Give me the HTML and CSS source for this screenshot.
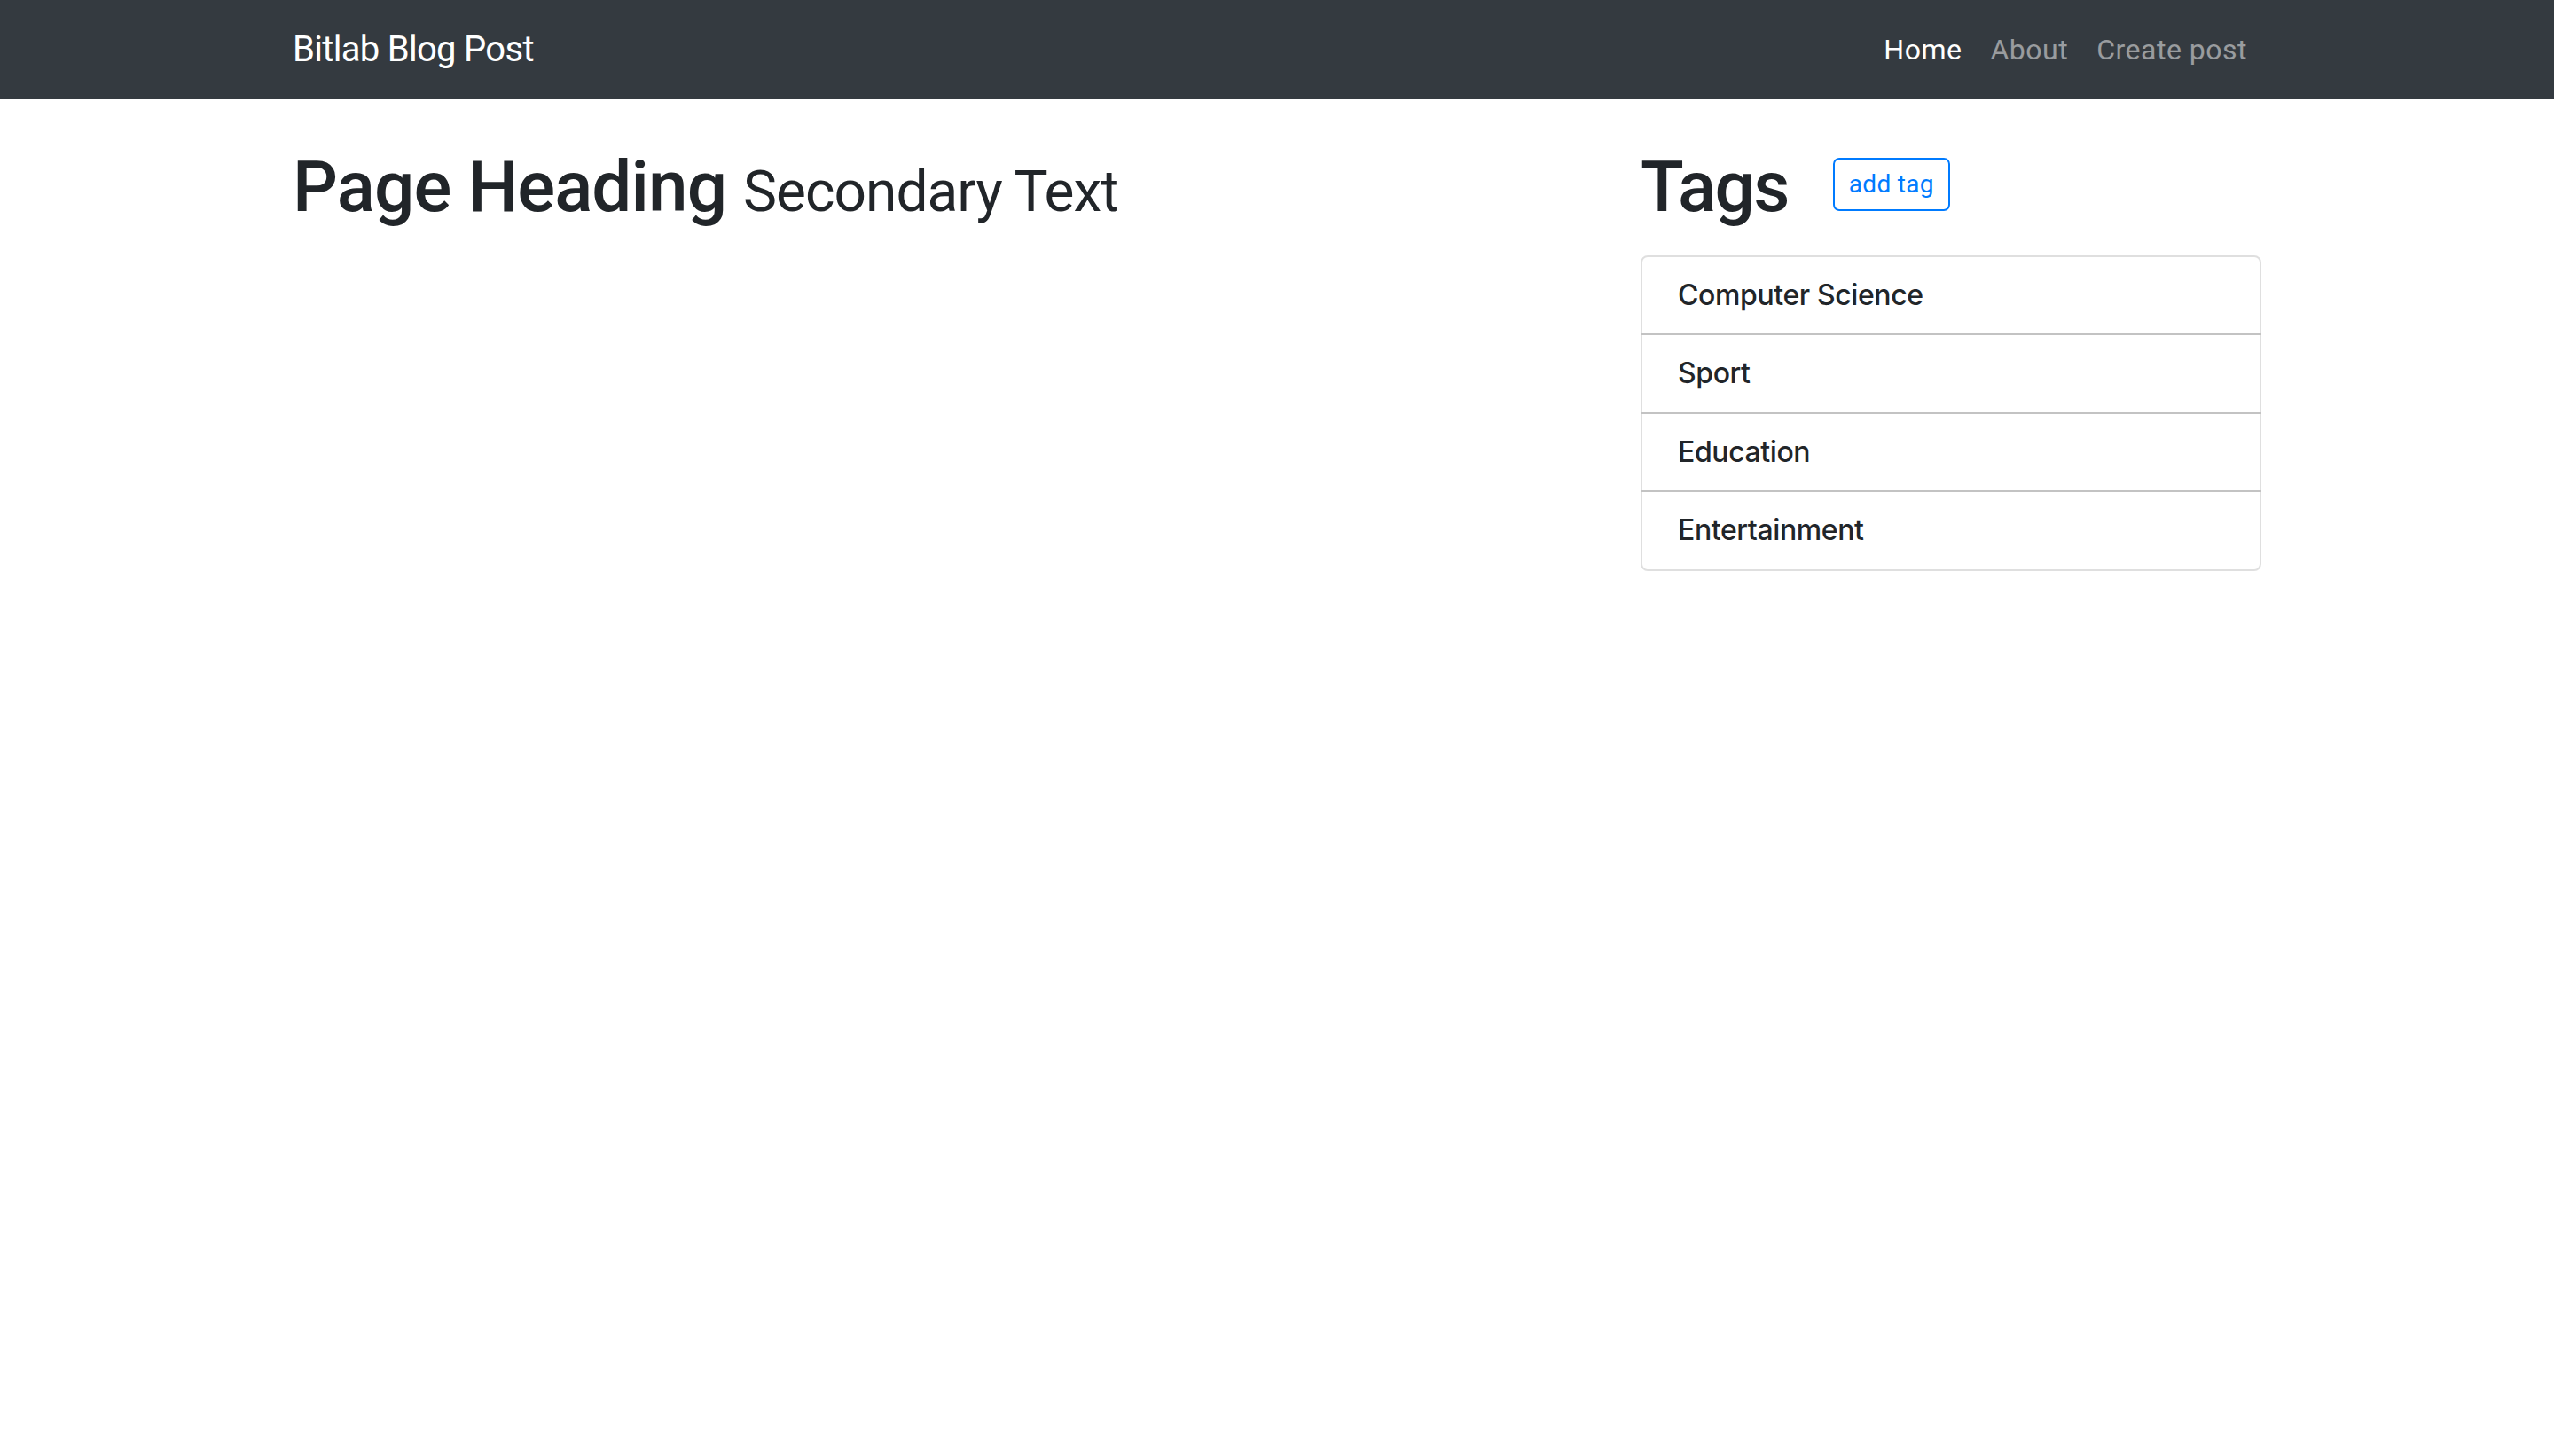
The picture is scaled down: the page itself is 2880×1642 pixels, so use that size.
FILE: index.html
```html
<!DOCTYPE html>
<html lang="en">
<head>
<meta charset="utf-8">
<title>Bitlab Blog Post</title>
<link rel="stylesheet" href="styles.css">
</head>
<body>
<nav class="navbar">
  <div class="nav-inner">
    <a class="brand" href="#">Bitlab Blog Post</a>
    <ul class="nav-links">
      <li><a class="nav-link active" href="#">Home</a></li>
      <li><a class="nav-link" href="#">About</a></li>
      <li><a class="nav-link" href="#">Create post</a></li>
    </ul>
  </div>
</nav>
<main class="container">
  <section class="main-col">
    <h1 class="heading">Page Heading <small class="heading-sub">Secondary Text</small></h1>
  </section>
  <aside class="side-col">
    <div class="tags-header">
      <h1 class="heading tags-title">Tags</h1>
      <button class="btn-outline" type="button">add tag</button>
    </div>
    <ul class="list-group">
      <li class="list-item"><h6 class="item-title">Computer Science</h6></li>
      <li class="list-item"><h6 class="item-title">Sport</h6></li>
      <li class="list-item"><h6 class="item-title">Education</h6></li>
      <li class="list-item"><h6 class="item-title">Entertainment</h6></li>
    </ul>
  </aside>
</main>
</body>
</html>
```
FILE: styles.css
```css
* { box-sizing: border-box; }
html, body {
  margin: 0;
  padding: 0;
  background: #fff;
}
body {
  font-family: Roboto, Inter, "Noto Sans", "Liberation Sans", sans-serif;
  color: #212529;
  font-size: 32px;
  line-height: 1.5;
  min-height: 1642px;
}
.navbar {
  background: #343a40;
  height: 112px;
}
.nav-inner {
  width: 2220px;
  margin: 0 auto;
  height: 100%;
  display: flex;
  align-items: center;
  justify-content: space-between;
}
.brand {
  color: #fff;
  text-decoration: none;
  font-size: 40px;
  line-height: 60px;
  letter-spacing: -0.7px;
}
.nav-links {
  list-style: none;
  margin: 0;
  padding: 0;
  display: flex;
}
.nav-link {
  display: block;
  padding: 0 16px;
  line-height: 48px;
  letter-spacing: 0.5px;
  color: rgba(255, 255, 255, 0.5);
  text-decoration: none;
}
.nav-link.active { color: #fff; }
.container {
  width: 2220px;
  margin: 48px auto 0;
  display: grid;
  grid-template-columns: 1fr 700px;
}
.heading {
  margin: 0;
  padding-top: 3px;
  font-size: 80px;
  font-weight: 500;
  line-height: 1.2;
  letter-spacing: -0.9px;
}
.tags-title { letter-spacing: -1.6px; }
.heading-sub {
  font-size: 80%;
  font-weight: 400;
  letter-spacing: -1px;
}
.tags-header {
  display: flex;
  align-items: center;
  margin-bottom: 29px;
}
.btn-outline {
  margin-left: 50px;
  margin-bottom: 4px;
  font-family: inherit;
  font-size: 28px;
  line-height: 42px;
  letter-spacing: 0.3px;
  padding: 7px 16px;
  color: #007bff;
  background: transparent;
  border: 2px solid #007bff;
  border-radius: 7px;
}
.list-group {
  list-style: none;
  margin: 0;
  padding: 0;
  display: flex;
  flex-direction: column;
}
.list-item {
  padding: 24px 40px;
  border: 2px solid rgba(0, 0, 0, 0.125);
  margin-bottom: -2px;
}
.list-item:first-child { border-radius: 8px 8px 0 0; }
.list-item:last-child { border-radius: 0 0 8px 8px; margin-bottom: 0; }
.item-title {
  margin: 0;
  font-family: Inter, Roboto, "Noto Sans", sans-serif;
  font-size: 32px;
  font-weight: 500;
  line-height: 1.2;
  letter-spacing: -0.4px;
}
```
